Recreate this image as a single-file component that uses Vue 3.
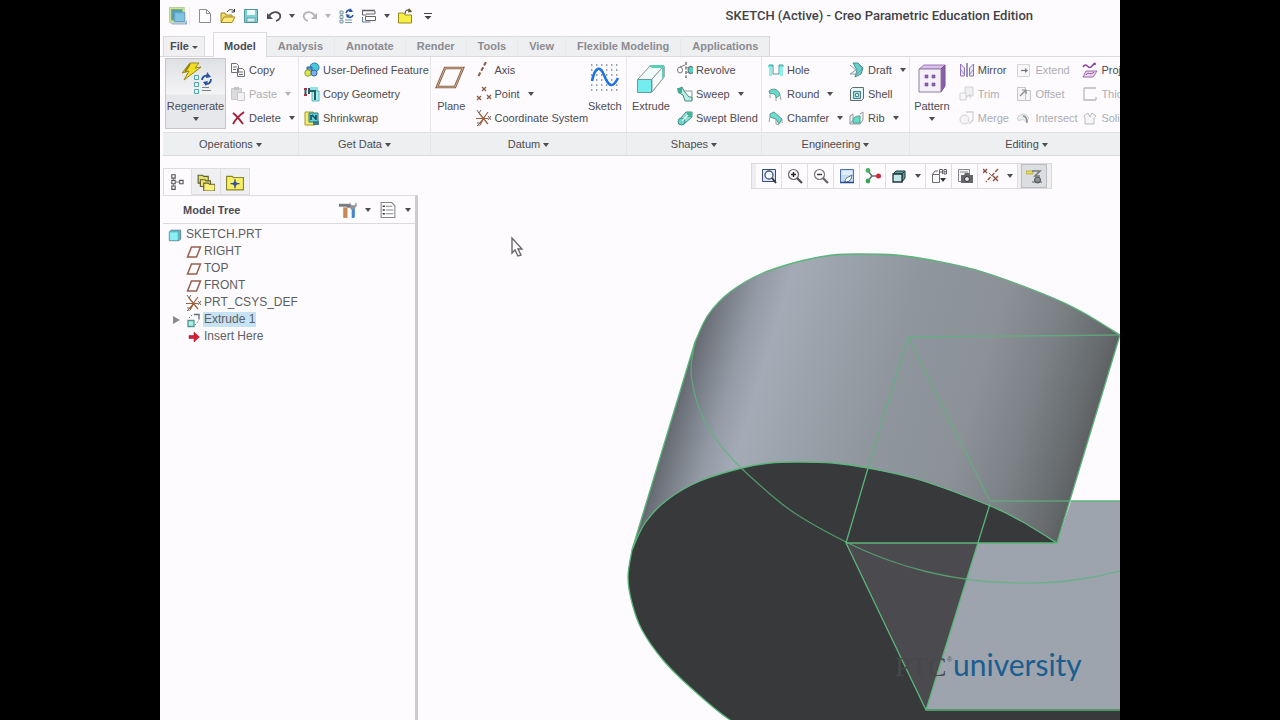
<script setup>
import { ref } from 'vue'

const icons = {
  app: '<rect x="0.5" y="0.5" width="13" height="13" fill="#cfe6a8" stroke="#b9cf98"/><rect x="2.5" y="2.5" width="9" height="9" fill="#4f9bd0" stroke="#69a84f"/><rect x="5" y="5" width="9" height="8" fill="#7fc5e2" stroke="#6a9fc8"/><path d="M1 14.500h13l2-3v4H3z" fill="#8fabd8"/>',
  newFile: '<path d="M2.500 1.500h7l4 4v9h-11z" fill="#fff" stroke="#8b8b92"/><path d="M9.500 1.500v4h4" fill="none" stroke="#8b8b92"/>',
  open: '<path d="M1 14V5h4l1 2h6v3" fill="#f4dc60" stroke="#a08a28"/><path d="M1 14.500l3-5.500h11l-3 5.500z" fill="#fbe876" stroke="#a08a28"/><path d="M7 4c2-3 5-3 7-1M14.500 1v3h-3" fill="none" stroke="#333"/>',
  save: '<path d="M1.500 1.500h13v13h-13z" fill="#7fd0d4" stroke="#4c959b"/><rect x="4" y="2" width="8" height="5" fill="#f2fbfb"/><rect x="4" y="10" width="8" height="4" fill="#d7eef0" stroke="#3d8990" stroke-width=".6"/>',
  undo: '<path d="M3 8c3-5 9-5 11-1.500 1 3-1 5.500-4 6.500" fill="none" stroke="#4a4a50" stroke-width="1.800"/><path d="M1 5v6h6z" fill="#4a4a50"/>',
  redo: '<path d="M13 8c-3-5-9-5-11-1.500-1 3 1 5.500 4 6.500" fill="none" stroke="#b4b4b8" stroke-width="1.800"/><path d="M15 5v6H9z" fill="#b4b4b8"/>',
  regenSmall: '<path d="M2 3h3v3H2zM2 7.500h3v3H2zM2 12h3v3H2z" fill="#d9eef2" stroke="#7b98a3"/><path d="M8 5c1-3 4-4 6-2M15 7c-1 3-4 3-6 1" fill="none" stroke="#28549b" stroke-width="1.600"/><path d="M12 0l3 4h-4zM8 6l4 1-3 3z" fill="#28549b"/><path d="M7 12h7M7 14.500h7" stroke="#7394ad"/>',
  windows: '<path d="M1 2.500h13" stroke="#65656d" stroke-width="1.600"/><path d="M1.500 2v5h4M14 3v3M5 6h9" fill="none" stroke="#65656d"/><path d="M4.500 8.500h10v4h-10z" fill="#fff" stroke="#65656d"/><path d="M1.500 9v5h8" fill="none" stroke="#5d7ba6"/>',
  close: '<path d="M1.500 5h5l1.500 2h6.500v8h-13z" fill="#f7ed44" stroke="#9a8b1b"/><path d="M8 6c0-4 3-5 6-3" fill="none" stroke="#5c5c30" stroke-width="1.300"/><path d="M12 0l3 4-4 .5z" fill="#5c5c30"/>',
  overflow: '<path d="M4 5.500h8" stroke="#444"/><path d="M4.500 8h7L8 11.500z" fill="#444"/>',
  regenerate: '<path d="M10 1l9 0-4 5 6-1L4 18l5-9-7 2z" fill="#f2de25" stroke="#96861c"/><path d="M10 2L5 10" stroke="#8a7a18" stroke-width="1.500"/><path d="M14.500 13.500h4v4h-4zM14.500 20.500h4v4h-4zM14.500 27.500h4v4h-4z" fill="#e2fafa" stroke="#4fa5a3"/><path d="M22 18c0-3 3-5 6-4M31 17c0 4-3 6-6 4" fill="none" stroke="#27509a" stroke-width="1.800"/><path d="M27 10l4 5-5 1zM26 24l-3-4 5-1z" fill="#27509a"/><path d="M22 25.500h7M22 28.500h9" stroke="#7c8088"/>',
  copy: '<path d="M1.500 1.500h5l2 2v7h-7zM7.500 6.500h5l2 2v6h-7z" fill="#f7f7f8" stroke="#707078"/><path d="M3 5h4M3 7.500h3M9 10h4M9 12.500h4" stroke="#707078"/>',
  paste: '<path d="M1.500 2.500h10v11h-10z" fill="#d3d3d6" stroke="#bdbdc2"/><path d="M4 1h5v3H4z" fill="#b5b5ba"/><path d="M7.500 6.500h7v8h-7z" fill="#f0f0f1" stroke="#bdbdc2"/>',
  delete: '<path d="M3 3c4 3 7 7 10 11M14 2C10 5 5 10 3 14" fill="none" stroke="#a32036" stroke-width="1.900"/>',
  udf: '<circle cx="10.500" cy="5.500" r="4.500" fill="#47c6dc" stroke="#2c7da7"/><path d="M3 5h5v5H3z" fill="#5c8bd4" stroke="#3460a4"/><circle cx="4" cy="11" r="3.200" fill="#d9e84e" stroke="#8b9c32"/><circle cx="10" cy="11" r="3" fill="#7bb1ec" stroke="#3667a9"/>',
  copyGeom: '<path d="M6 1h8v4H6z" fill="#8de4e2"/><path d="M8 5h7v10H8z" fill="#a8eeee" stroke="#5fb5b8"/><path d="M1.500 2v8M5 2v6M4 5h7v9" fill="none" stroke="#285f62" stroke-width="2"/><path d="M0 2h3v2H0zM0 8h3v2H0z" fill="#a6304b"/>',
  shrink: '<path d="M1 2h8l2 3v10H1z" fill="#f5ea6a" stroke="#a49a28"/><path d="M5 3h9v9H5z" fill="#5ed2da" stroke="#2b7a86"/><path d="M7 5v5M8 5l4 4M12 5v5" stroke="#174c63" stroke-width="1.600" fill="none"/><path d="M9 11h6v4H9z" fill="#3b7e87"/>',
  plane: '<path d="M10 6h18l-8 19H2z" fill="none" stroke="#8a5a42" stroke-width="2.600"/><path d="M10 6h18l-8 19H2z" fill="none" stroke="#d9c8a2" stroke-width=".8"/>',
  axis: '<path d="M10 0L2 15" stroke="#8e5a43" stroke-width="2" stroke-dasharray="4 2"/>',
  point: '<path d="M6 1l4 4M10 1L6 5M1 10l4 4M5 10l-4 4M11 9l4 4M15 9l-4 4" stroke="#915843" stroke-width="1.300"/>',
  csys: '<path d="M0 8.500h12M3 3l9 11M12 2L4 13M8 8l-4 7" stroke="#9b603f" stroke-width="1.200"/><path d="M1 0l2 3 2-3M1 13h3l-3 3h3M12 6l3 4M15 6l-3 4" fill="none" stroke="#77665c"/>',
  sketch: '<path d="M2 3h28M2 8h28M2 13h28M2 18h28M2 23h28M2 28h28" stroke="#77839a" stroke-width="1.400" stroke-dasharray="1.400 3.600"/><path d="M3 19c3-14 8-16 12-6s8 15 14 3" fill="none" stroke="#1f74df" stroke-width="2.600"/>',
  extrude: '<path d="M3 17L15 4h14L17 17M29 4v11L17 30" fill="#f2fbfa" stroke="#858f90"/><path d="M17 17L29 4v11L17 30z" fill="#f4f8f8" stroke="#8ba0a0"/><path d="M14 3h15v3H17z" fill="#59d0bb"/><path d="M27 5h2v11h-2z" fill="#59d0bb"/><path d="M2.500 17.500h14v13h-14z" fill="#74edf0" stroke="#649a98"/>',
  revolve: '<path d="M9 0v16" stroke="#52525b" stroke-width="1.200" stroke-dasharray="3 1.500"/><ellipse cx="3" cy="8" rx="2.500" ry="3" fill="none" stroke="#777981"/><ellipse cx="14" cy="8" rx="3" ry="3.500" fill="#55d3c1" stroke="#577e7a"/><path d="M3 5l5-2M10 6l4-2M10 10l4 2" stroke="#777981"/>',
  sweep: '<path d="M1 3l4-2 2 4 5 6h3v4H8L6 9 2 7z" fill="#b9ede5" stroke="#4d8b82"/><path d="M0 2h5v5H1z" fill="#3faf94"/><path d="M7 5l8 0v9" fill="none" stroke="#7d9b98"/>',
  blend: '<path d="M2 10l7-8 6 0v5l-8 7z" fill="#8ae1d5" stroke="#438e84"/><circle cx="4.500" cy="11.500" r="3.500" fill="#60d8cd" stroke="#438e84"/><path d="M10 2h5v5h-5z" fill="#40b39a"/><path d="M5 11l6-6" stroke="#ecffff" stroke-width="1.500"/>',
  hole: '<path d="M0 3h5v2H0zM11 3h5v2h-5z" fill="#63e8e4"/><path d="M0 5h4v9H1V6zM12 5h3v9h-3z" fill="#8ceeed"/><path d="M1 3h4v9h6V3h4" fill="none" stroke="#559495"/>',
  round: '<path d="M1 5c5-4 10-1 11 4l-4 3C8 8 5 7 2 8z" fill="#67d9cb" stroke="#579990"/><path d="M8 12v3M12 9l1 5M2 9v3" stroke="#9aa2a2"/>',
  chamfer: '<path d="M2 4l4-2 8 7-3 5-3-5-6-2z" fill="#6cddd0" stroke="#579990"/><path d="M2 7l-1 5M8 9v5l3 1M14 9v4" fill="none" stroke="#9aa2a2"/>',
  draft: '<path d="M4 1h5l5 5-2 6-6 3 2-7z" fill="#5fd5cd" stroke="#488f92"/><path d="M1 3l6 5-6 4h4l5 2M10 3l3 4-6 6" fill="none" stroke="#839ba0"/>',
  shell: '<path d="M1.500 3.500l2-2h11v11l-2 2h-11z" fill="#e4f4f3" stroke="#606b70"/><path d="M4.500 5.500h7v7h-7z" fill="#a9dfda" stroke="#4f7f82"/><path d="M6.500 7.500h3v3h-3z" fill="#e4ffff" stroke="#4a8c8a"/>',
  rib: '<path d="M1 6l3-2v6l-3 4zM1 14h10l3-4V2l-3 2" fill="#f3f6f6" stroke="#8f999b"/><path d="M4 13c0-6 2-7 7-7v7z" fill="#63dfc7" stroke="#4f988d"/>',
  pattern: '<path d="M3 7l5-4h21l-4 4z" fill="#d9bfe9" stroke="#9d7cb2"/><path d="M25 7l4-4v21l-4 6z" fill="#8b5eaa" stroke="#77508f"/><path d="M3 7h22v23H3z" fill="#f5effa" stroke="#907fa0"/><path d="M9 13h3v3H9zM16 13h3v3h-3zM9 21h3v3H9zM16 21h3v3h-3z" fill="#9561b4" stroke="#6d4690" stroke-width=".6"/>',
  mirror: '<path d="M8 1v14" stroke="#515681" stroke-width="1.200"/><path d="M1.500 2v12h4V6zM14.500 2v12h-4V6z" fill="#eae3fa" stroke="#8e72bd"/><path d="M2 8l3 4M14 8l-3 4" stroke="#7a9ed0"/>',
  trim: '<path d="M6 1h8v9H6z" fill="#ededf0" stroke="#c7c7cc"/><path d="M1 7h6v7H1z" fill="#f8f8f9" stroke="#c7c7cc"/><path d="M7 12l4-4v5" stroke="#c7c7cc" fill="none"/>',
  merge: '<circle cx="5.500" cy="9.500" r="4.500" fill="#f3f3f4" stroke="#c6c6cb"/><path d="M7 2h7v8l-4 4" fill="none" stroke="#c6c6cb" stroke-width="1.300"/>',
  extend: '<path d="M1.500 2.500h12v12h-12z" fill="#f6f6f7" stroke="#cacace"/><path d="M5 8.500h5" stroke="#55555d" stroke-width="1.200"/><path d="M9 6l3 2.500L9 11z" fill="#55555d"/>',
  offset: '<path d="M1.500 1.500h8v13h-8zM9.500 4.500h5v10h-5z" fill="#f4f4f5" stroke="#b8b8bd"/><path d="M4 10l5-5M6 4h4v4" fill="none" stroke="#6c6c74" stroke-width="1.200"/>',
  intersect: '<path d="M1 8c4-5 9-5 12 0l-3 4c-2-3-4-3-7-1z" fill="#eaeaec" stroke="#c4c4c8"/><path d="M7 6c3 0 4 3 4 7" fill="none" stroke="#707078" stroke-width="1.500"/>',
  project: '<path d="M1 5c4-6 5 4 9-1s3-2 3-1" fill="none" stroke="#8c3ba0" stroke-width="1.500"/><path d="M4 9h11l-4 6H1z" fill="#ead7f1" stroke="#9e65ad"/><path d="M4 13c2-4 4 1 8-3" fill="none" stroke="#8c3ba0"/>',
  thicken: '<path d="M2 2v12h12M5 2h9M2 2h3M14 11v3" fill="none" stroke="#a8a8ae" stroke-width="1.300"/>',
  solidify: '<path d="M2 6l4-3 2 4 2-4 4 3-2 2v6H3V8z" fill="#f5f5f6" stroke="#aaaab0"/>',
  tree: '<path d="M2.500 1.500h3v3h-3zM2.500 6.500h3v3h-3zM2.500 11.500h3v3h-3zM9.500 6.500h3v3h-3z" fill="#fff" stroke="#55555b"/><path d="M4 4.500v2M4 9.500v2M5.500 8h4" stroke="#777"/>',
  folders: '<path d="M1 2h4l1 1h4v6H1z" fill="#e4df6b" stroke="#5f5e35"/><path d="M3 6h4l1 1h4v5H3z" fill="#efe86b" stroke="#5f5e35"/><path d="M6 9h4l1 1h5v6H6z" fill="#faf27b" stroke="#5f5e35"/>',
  favorite: '<path d="M.5 3h5l1 1h9v11H.5z" fill="#f5ef62" stroke="#8b842d"/><path d="M8 5.500v8M4 9.500h8" stroke="#394ca0" stroke-width="1.200"/><path d="M8 7l2.500 2.500L8 12 5.500 9.500z" fill="#394ca0"/>',
  tools: '<path d="M0 3h10l2 3H8V5H0z" fill="#747b83" stroke="#4f565f" stroke-width=".5"/><path d="M4 6h4v10H4z" fill="#c98955"/><path d="M12 6h3v9l-1 1h-2z" fill="#4687d0"/><path d="M10 1l2 3h3l1-3 1 3-3 4h-3z" fill="#8e9398"/>',
  list: '<path d="M1.500 1.500h10l3 3v11h-13z" fill="#fff" stroke="#85858c"/><path d="M3 5h2M3 8.500h2M3 12h2" stroke="#33333a" stroke-width="1.500"/><path d="M6 5h6M6 8.500h7M6 12h7" stroke="#85858c"/>',
  part: '<path d="M1.500 4.500l2-2h11v10l-2 2h-11z" fill="#5bb8c4" stroke="#597e87"/><path d="M2 5h9v9H2z" fill="#8af0f3"/>',
  planeSmall: '<path d="M5.500 3h9l-4 10h-9z" fill="none" stroke="#985f4b" stroke-width="1.500"/>',
  feature: '<path d="M2 8.500h6v6H2z" fill="#aaf0ed" stroke="#52968f" stroke-width="1.300"/><path d="M3 6l4-4M9 13l4-5" stroke="#68797e" stroke-dasharray="1.500 1.500"/><path d="M8 2.500h5v5" fill="none" stroke="#5b7278" stroke-width="1.300"/>',
  insert: '<path d="M3 6.500h5V3l5.500 5L8 13V9.500H3z" fill="#d41f35" stroke="#931627" stroke-width=".5"/>',
  refit: '<path d="M1.500 1.500h13v12h-13z" fill="#dce9fa" stroke="#3c4c72"/><circle cx="8" cy="7" r="4" fill="#f2f8ff" stroke="#4c5567" stroke-width="1.300"/><path d="M11 10l4 5" stroke="#35373d" stroke-width="2"/>',
  zoomIn: '<circle cx="6.500" cy="6.500" r="5" fill="#fcfcfc" stroke="#66666c" stroke-width="1.200"/><path d="M10 10l5 5" stroke="#4c4c52" stroke-width="2.200"/><path d="M4 6.500h5M6.500 4v5" stroke="#222" stroke-width="1.400"/>',
  zoomOut: '<circle cx="6.500" cy="6.500" r="5" fill="#fcfcfc" stroke="#77777d" stroke-width="1.200"/><path d="M10 10l5 5" stroke="#626268" stroke-width="2.200"/><path d="M4 6.500h5" stroke="#333" stroke-width="1.400"/>',
  repaint: '<path d="M1.500 1.500h13v13h-13z" fill="#c6dbf3" stroke="#4d73a7"/><path d="M3 3h10v4H3z" fill="#dfecfb"/><path d="M6 14c0-4 2-4 7-7-1 5-2 7-7 7z" fill="#fff" stroke="#496892"/><path d="M1 14.500h14" stroke="#254b8b" stroke-width="1.500"/>',
  render: '<path d="M3 3l4 5 6 0M7 8l-4 5" stroke="#60706a" fill="none" stroke-width="1.500"/><circle cx="3" cy="2.500" r="2.400" fill="#41b560"/><circle cx="3" cy="13" r="2.400" fill="#39a558"/><circle cx="13.500" cy="8" r="2.500" fill="#cf2638"/>',
  cube: '<path d="M2 6l3-3h9l-3 3zM11 6l3-3v7l-3 4z" fill="#52a598" stroke="#26343a"/><path d="M2 6h9v8H2z" fill="#c3e8e8" stroke="#26343a" stroke-width="1.300"/>',
  saved: '<path d="M1.500 6.500h7v8h-7zM1 7l3-4h3" fill="#fafafa" stroke="#6c6c73"/><path d="M8.500 6V1.500h3V6M8.500 4h3M13 1.500h2.500V6H13zM13 3.800h2.500" fill="none" stroke="#62636b"/><path d="M9 10h6l-3 4z" fill="#333"/>',
  camera: '<path d="M1.500 1.500h11v12h-11z" fill="#f5f5f5" stroke="#85858b"/><path d="M3 4h8" stroke="#85858b"/><path d="M4 7h3l1-2h4l1 2h3v8H4z" fill="#65656b"/><circle cx="10" cy="11" r="2.500" fill="#e6e6e8" stroke="#333"/>',
  datum: '<path d="M0 1l4 4M4 1L0 5M10 8l5 5M15 8l-5 5" stroke="#8a4f3e" stroke-width="1.400"/><path d="M15 1L3 14" stroke="#9c5b46" stroke-width="1.500" stroke-dasharray="4 1.500"/><path d="M6 5l3 3" stroke="#b5715d"/>',
  spin: '<path d="M0 3h7v3H0z" fill="#e5df54" stroke="#9c9938" stroke-width=".6"/><path d="M6 3h8l-5 5h5" fill="none" stroke="#73787b" stroke-width="1.600"/><circle cx="11.500" cy="12" r="3" fill="#8b9594" stroke="#495052"/><path d="M6 14h10" stroke="#5b6265"/>'
}

const quick = [
  { icon: 'newFile', name: 'New' }, { icon: 'open', name: 'Open' }, { icon: 'save', name: 'Save' },
  { icon: 'undo', name: 'Undo', menu: true }, { icon: 'redo', name: 'Redo', menu: true, off: true },
  { icon: 'regenSmall', name: 'Regenerate' }, { icon: 'windows', name: 'Windows', menu: true },
  { icon: 'close', name: 'Close' }, { icon: 'overflow', name: 'Customize' }
]

const tabs = ['Model', 'Analysis', 'Annotate', 'Render', 'Tools', 'View', 'Flexible Modeling', 'Applications']
const activeTab = ref('Model')

const b = (icon, text, menu = false, off = false) => ({ icon, text, menu, off })
const groups = [
  { id: 'operations', title: 'Operations', parts: [
    { big: b('regenerate', 'Regenerate', true), pressed: true },
    { list: [b('copy', 'Copy'), b('paste', 'Paste', true, true), b('delete', 'Delete', true)] }] },
  { id: 'data', title: 'Get Data', parts: [
    { list: [b('udf', 'User-Defined Feature'), b('copyGeom', 'Copy Geometry'), b('shrink', 'Shrinkwrap')] }] },
  { id: 'datums', title: 'Datum', parts: [
    { big: b('plane', 'Plane') },
    { list: [b('axis', 'Axis'), b('point', 'Point', true), b('csys', 'Coordinate System')] },
    { big: b('sketch', 'Sketch') }] },
  { id: 'shapes', title: 'Shapes', parts: [
    { big: b('extrude', 'Extrude') },
    { list: [b('revolve', 'Revolve'), b('sweep', 'Sweep', true), b('blend', 'Swept Blend')] }] },
  { id: 'engineering', title: 'Engineering', parts: [
    { list: [b('hole', 'Hole'), b('round', 'Round', true), b('chamfer', 'Chamfer', true)] },
    { list: [b('draft', 'Draft', true), b('shell', 'Shell'), b('rib', 'Rib', true)] }] },
  { id: 'editing', title: 'Editing', parts: [
    { big: b('pattern', 'Pattern', true) },
    { list: [b('mirror', 'Mirror'), b('trim', 'Trim', false, true), b('merge', 'Merge', false, true)] },
    { list: [b('extend', 'Extend', false, true), b('offset', 'Offset', false, true), b('intersect', 'Intersect', false, true)] },
    { list: [b('project', 'Project'), b('thicken', 'Thicken', false, true), b('solidify', 'Solidify', false, true)] }] }
]

const panes = [{ icon: 'tree', name: 'Model Tree' }, { icon: 'folders', name: 'Folder Browser' }, { icon: 'favorite', name: 'Favorites' }]
const nodes = [
  { icon: 'planeSmall', text: 'RIGHT' }, { icon: 'planeSmall', text: 'TOP' }, { icon: 'planeSmall', text: 'FRONT' },
  { icon: 'csys', text: 'PRT_CSYS_DEF' }, { icon: 'feature', text: 'Extrude 1', branch: true }, { icon: 'insert', text: 'Insert Here' }
]
const selected = ref('Extrude 1')

const viewTools = [
  { icon: 'refit', name: 'Refit' }, { icon: 'zoomIn', name: 'Zoom In' }, { icon: 'zoomOut', name: 'Zoom Out' },
  { icon: 'repaint', name: 'Repaint' }, { icon: 'render', name: 'Rendering' }, { icon: 'cube', name: 'Display Style', menu: true },
  { icon: 'saved', name: 'Saved Views' }, { icon: 'camera', name: 'View Manager' },
  { icon: 'datum', name: 'Datum Display', menu: true }, { icon: 'spin', name: 'Spin Center', on: true }
]

// Catmull-Rom spline through a list of points, as cubic segments.
function spline(pts) {
  let d = ''
  for (let i = 0; i < pts.length - 1; i++) {
    const p0 = pts[i - 1] || pts[i]
    const p1 = pts[i]
    const p2 = pts[i + 1]
    const p3 = pts[i + 2] || p2
    d += `C${p1[0] + (p2[0] - p0[0]) / 6} ${p1[1] + (p2[1] - p0[1]) / 6} ${p2[0] - (p3[0] - p1[0]) / 6} ${p2[1] - (p3[1] - p1[1]) / 6} ${p2[0]} ${p2[1]}`
  }
  return d
}
const rim = [[1057, 543], [1021, 521], [988, 505], [920, 480], [868, 468], [833, 463], [797, 462], [770, 463], [742, 468], [700, 481], [667, 500], [645, 523], [632, 550]]
const lower = [[632, 550], [628, 577], [632, 603], [642, 630], [663, 660], [690, 687], [730, 720], [783, 750]]
const far = rim.map(([x, y]) => [x + 63, y - 208])
const hidden = [[695, 342], [691, 369], [695, 395], [705, 422], [726, 452], [753, 479], [793, 512], [846, 542], [888, 560], [928, 572], [972, 580], [1017, 583], [1057, 582], [1093, 577], [1120, 571]]
const rimPath = 'M1057 543' + spline(rim)
const facePath = rimPath + spline(lower) + 'H1130V709H926L846 543Z'
const farPath = 'M1120 335' + spline(far)
const wallPath = farPath + 'L632 550' + spline([...rim].reverse()) + 'Z'
const hiddenPath = 'M695 342' + spline(hidden)
const lowerPath = 'M632 550' + spline(lower)
</script>

<template>
  <div class="stage">
    <main class="app">
      <header class="titlebar">
        <div class="quick">
          <svg class="logo" viewBox="0 0 16 16" v-html="icons.app"></svg>
          <template v-for="q in quick" :key="q.name">
            <button class="tool" :aria-label="q.name"><svg class="ico" viewBox="0 0 16 16" v-html="icons[q.icon]"></svg></button>
            <button v-if="q.menu" class="tool" :aria-label="q.name + ' options'"><i class="caret" :class="{ off: q.off }"></i></button>
          </template>
        </div>
        <h1>SKETCH (Active) - Creo Parametric Education Edition</h1>
      </header>

      <nav class="tabs">
        <button class="file">File <i class="caret small"></i></button>
        <button v-for="t in tabs" :key="t" class="tab" :class="{ active: t === activeTab }" @click="activeTab = t">{{ t }}</button>
      </nav>

      <div class="ribbon">
        <section v-for="g in groups" :key="g.id" class="group" :class="g.id">
          <div class="commands">
            <template v-for="(p, i) in g.parts" :key="i">
              <button v-if="p.big" class="big" :class="{ pressed: p.pressed }">
                <svg class="ico32" viewBox="0 0 32 32" v-html="icons[p.big.icon]"></svg>
                <span>{{ p.big.text }}</span>
                <i v-if="p.big.menu" class="caret"></i>
              </button>
              <div v-else class="list">
                <button v-for="c in p.list" :key="c.text" class="command" :class="{ disabled: c.off }">
                  <svg class="ico" viewBox="0 0 16 16" v-html="icons[c.icon]"></svg>
                  <span>{{ c.text }}</span>
                  <i v-if="c.menu" class="caret" :class="{ off: c.off }"></i>
                </button>
              </div>
            </template>
          </div>
          <button class="caption">{{ g.title }} <i class="caret"></i></button>
        </section>
      </div>

      <div class="workspace">
        <aside class="navigator">
          <div class="panes">
            <button v-for="(p, i) in panes" :key="p.name" class="pane" :class="{ active: i === 0 }" :aria-label="p.name">
              <svg class="ico" viewBox="0 0 16 16" v-html="icons[p.icon]"></svg>
            </button>
          </div>
          <div class="panel">
            <div class="panel-head">
              <h2>Model Tree</h2>
              <button class="tool" aria-label="Settings"><svg class="ico18" viewBox="0 0 17 17" v-html="icons.tools"></svg></button>
              <button class="tool" aria-label="Settings options"><i class="caret"></i></button>
              <button class="tool" aria-label="Show"><svg class="ico18" viewBox="0 0 16 17" v-html="icons.list"></svg></button>
              <button class="tool" aria-label="Show options"><i class="caret"></i></button>
            </div>
            <ul class="tree">
              <li class="root">
                <svg class="ico14" viewBox="0 0 16 16" v-html="icons.part"></svg><button class="node">SKETCH.PRT</button>
              </li>
              <li v-for="n in nodes" :key="n.text">
                <span class="twist"><i v-if="n.branch"></i></span>
                <svg class="ico" viewBox="0 0 16 16" v-html="icons[n.icon]"></svg>
                <button class="node" :class="{ selected: n.text === selected }" @click="selected = n.text">{{ n.text }}</button>
              </li>
            </ul>
          </div>
        </aside>

        <div class="viewport">
          <svg class="model" viewBox="418 156 702 564" preserveAspectRatio="xMaxYMax slice">
            <defs>
              <linearGradient id="wall" gradientUnits="userSpaceOnUse" x1="678" y1="400" x2="1065" y2="517">
                <stop offset="0" stop-color="#666b72" />
                <stop offset="0.05" stop-color="#7c828b" />
                <stop offset="0.11" stop-color="#949ba6" />
                <stop offset="0.18" stop-color="#a4abb6" />
                <stop offset="0.3" stop-color="#9aa2ab" />
                <stop offset="0.48" stop-color="#8f969e" />
                <stop offset="0.7" stop-color="#8b9197" />
                <stop offset="0.84" stop-color="#7b8185" />
                <stop offset="0.96" stop-color="#676b6e" />
                <stop offset="1" stop-color="#5d6164" />
              </linearGradient>
            </defs>
            <path d="M978 543H1057L1071 501H1130V710H926Z" fill="#9da4ae" />
            <path :d="facePath" fill="#37393b" />
            <path d="M846 543H978L926 710Z" fill="#4b4a4e" />
            <path :d="wallPath" fill="url(#wall)" />
            <g class="edges">
              <path :d="farPath" />
              <path :d="rimPath" />
              <path :d="lowerPath" />
              <path :d="hiddenPath" opacity="0.75" />
              <path d="M695 342L632 550M1120 335L1057 543H846L926 710H1130M990 504L926 710M1071 501H1130M868 468L846 543" />
              <path d="M1120 335L908 337L868 468M908 337L990 501H1071" opacity="0.75" />
            </g>
            <text class="ptc" x="895" y="676">PTC</text>
            <text class="reg" x="947" y="662">®</text>
            <text class="brand" x="953" y="676">university</text>
            <path d="M512 238v15l3-3 3 6 3-1-3-6h4z" fill="#fff" stroke="#66666c" stroke-width="1.400" />
          </svg>

          <div class="view-tools">
            <button v-for="v in viewTools" :key="v.name" class="view-tool" :class="{ on: v.on, wide: v.menu }" :aria-label="v.name">
              <svg class="ico" viewBox="0 0 16 16" v-html="icons[v.icon]"></svg>
              <i v-if="v.menu" class="caret"></i>
            </button>
          </div>
        </div>
      </div>
    </main>
  </div>
</template>

<style>
body { background: #000; }
</style>

<style scoped>
.stage {
  display: flex;
  justify-content: center;
  background: #000;
  font-family: "Liberation Sans", Arial, sans-serif;
  font-size: 11px;
  color: #4c4c52;
}
.app {
  display: flex;
  flex-direction: column;
  width: 75%;
  min-height: 100vh;
  overflow: hidden;
  background: #fdfbfd;
}
button {
  margin: 0;
  padding: 0;
  border: 0;
  background: none;
  font: inherit;
  color: inherit;
  white-space: nowrap;
}
h1, h2, ul { margin: 0; padding: 0; }
svg { display: block; flex: none; }
.ico { width: 16px; height: 16px; }
.ico14 { width: 14px; height: 14px; }
.ico18 { width: 18px; height: 18px; }
.ico32 { width: 32px; height: 32px; }
.caret {
  display: inline-block;
  flex: none;
  width: 0;
  border: 3px solid transparent;
  border-top: 4px solid #4c4c52;
  border-bottom: 0;
}
.caret.off { border-top-color: #b4b4b8; }
.caret.small { border-top-width: 3px; vertical-align: 1px; }

.titlebar {
  display: flex;
  align-items: center;
  height: 31px;
}
.quick {
  display: flex;
  align-items: center;
  gap: 7px;
  flex: none;
  padding-left: 9px;
}
.logo {
  width: 18px;
  height: 18px;
  padding-right: 2px;
  border-right: 1px solid #ececee;
}
.tool { display: flex; align-items: center; }
.titlebar h1 {
  flex: 1;
  padding-right: 87px;
  text-align: right;
  white-space: nowrap;
  font: 500 13px Roboto, sans-serif;
  color: #414146;
}

.tabs {
  display: flex;
  align-items: flex-end;
  height: 25px;
  padding-left: 3px;
  border-bottom: 1px solid #d9d9de;
  font-weight: bold;
}
.tabs button { height: 20px; padding-bottom: 2px; }
.tabs .file {
  width: 42px;
  margin-right: 8px;
  border: 1px solid #d9dade;
  border-bottom: 0;
  background: #f0f0f2;
}
.tabs .tab {
  padding: 0 11px 2px;
  border-top: 1px solid #d9dade;
  border-left: 1px solid #e8e9ec;
  background: #eeeff1;
  color: #8b8b91;
}
.tabs .tab:last-child { border-right: 1px solid #d9dade; }
.tabs .tab.active {
  height: 25px;
  margin-bottom: -1px;
  padding: 2px 10px 0;
  border: 1px solid #d9dade;
  border-bottom: 0;
  background: #fdfbfd;
  color: #4c4c52;
}
.tabs .tab.active + .tab { border-left: 0; }

.ribbon {
  display: flex;
  margin-left: 3px;
  border-bottom: 1px solid #d9d9de;
}
.group {
  display: flex;
  flex-direction: column;
  flex: none;
  border-right: 1px solid #e6e6ea;
  box-sizing: border-box;
}
.operations { width: 136px; }
.data { width: 132px; }
.datums { width: 196px; }
.shapes { width: 135px; }
.engineering { width: 148px; }
.editing { width: 234px; }
.commands { display: flex; height: 75px; }
.caption {
  height: 23px;
  padding-bottom: 1px;
  border-top: 1px solid #dfdfe3;
  background: #eeeff1;
}
.caption .caret { vertical-align: 1px; }
.list {
  display: flex;
  flex-direction: column;
  padding: 1px 0 0 4px;
}
.command {
  display: flex;
  align-items: center;
  gap: 3px;
  height: 24px;
}
.command .caret { margin-left: 5px; }
.command.disabled { color: #adadb2; }
.command.disabled .ico { opacity: 0.8; }
.big {
  display: flex;
  flex-direction: column;
  align-items: center;
  width: 44px;
  padding-top: 5px;
}
.big span { margin-top: 6px; line-height: 13px; }
.big .caret { margin-top: 4px; }
.big.pressed {
  width: 61px;
  height: 71px;
  margin: 1px 0 0 2px;
  padding-top: 3px;
  border: 1px solid #c5c6ca;
  background: linear-gradient(#dfe0e4, #f4f4f6 35px, #e7e8eb 36px);
}
.data .list { padding-left: 5px; }
.datums .big { width: 42px; }
.datums .list { width: 108px; }
.datums .big:last-child { width: 44px; }
.shapes .big { width: 48px; }
.shapes .list { padding-left: 2px; }
.engineering .list { width: 75px; padding-left: 6px; }
.editing .list { width: 53px; padding-left: 5px; }
.editing .list + .list { width: 61px; }

.workspace { display: flex; flex: 1; }
.navigator {
  display: flex;
  flex-direction: column;
  width: 255px;
  flex: none;
  padding: 12px 0 0 3px;
}
.panes { display: flex; height: 27px; }
.pane {
  display: flex;
  align-items: center;
  justify-content: center;
  width: 29px;
  border: 1px solid #dedee2;
  border-left: 0;
  background: #f0f0f2;
  box-sizing: border-box;
}
.pane .ico { width: 18px; height: 18px; }
.pane.active { border-bottom-color: transparent; border-left: 1px solid #dedee2; background: #fdfbfd; }
.panel {
  flex: 1;
  border-top: 1px solid #dedee2;
  border-right: 3px solid #cbcbd0;
}
.panel-head {
  display: flex;
  align-items: center;
  gap: 8px;
  height: 27px;
  padding: 0 4px 0 20px;
  border-bottom: 1px solid #d9d9de;
}
.panel-head h2 { flex: 1; font-size: 11px; }
.tree { padding-top: 2px; list-style: none; font-size: 12px; color: #5e5e64; }
.tree li { display: flex; align-items: center; height: 17px; }
.tree .root { padding-left: 5px; gap: 2px; }
.twist { width: 23px; padding-left: 10px; box-sizing: border-box; }
.twist i {
  display: block;
  width: 0;
  border: 4px solid transparent;
  border-left: 7px solid #8b8b90;
  border-right: 0;
}
.node { padding: 0 1px; line-height: 15px; margin-left: 1px; }
.node.selected { background: #c5e3f3; }

.viewport {
  position: relative;
  flex: 1;
  min-width: 0;
  display: flex;
  justify-content: flex-end;
  align-items: flex-start;
}
.model {
  position: absolute;
  inset: 0;
  width: 100%;
  height: 100%;
}
.edges path { fill: none; stroke: #5bb57a; stroke-width: 1.3px; }
.ptc { font: 28px "Liberation Serif", serif; fill: #47474b; }
.reg { font: 7px "Liberation Sans", sans-serif; fill: #55585e; }
.brand { font: 30px Lato, sans-serif; fill: #1a5d8f; }
.view-tools {
  position: relative;
  display: flex;
  margin: 7px 68px 0 0;
  padding: 0 4px;
  border: 1px solid #d9d9de;
  background: #eeeef1;
}
.view-tool {
  display: flex;
  align-items: center;
  justify-content: center;
  width: 26px;
  height: 24px;
  border-right: 1px solid #dfdfe4;
  background: #fdfbfd;
  box-sizing: border-box;
}
.view-tool.wide { width: 40px; gap: 8px; justify-content: flex-start; padding-left: 5px; }
.view-tool.on { margin-left: 3px; border: 1px solid #bcbdc2; background: #dcdde0; }
</style>
